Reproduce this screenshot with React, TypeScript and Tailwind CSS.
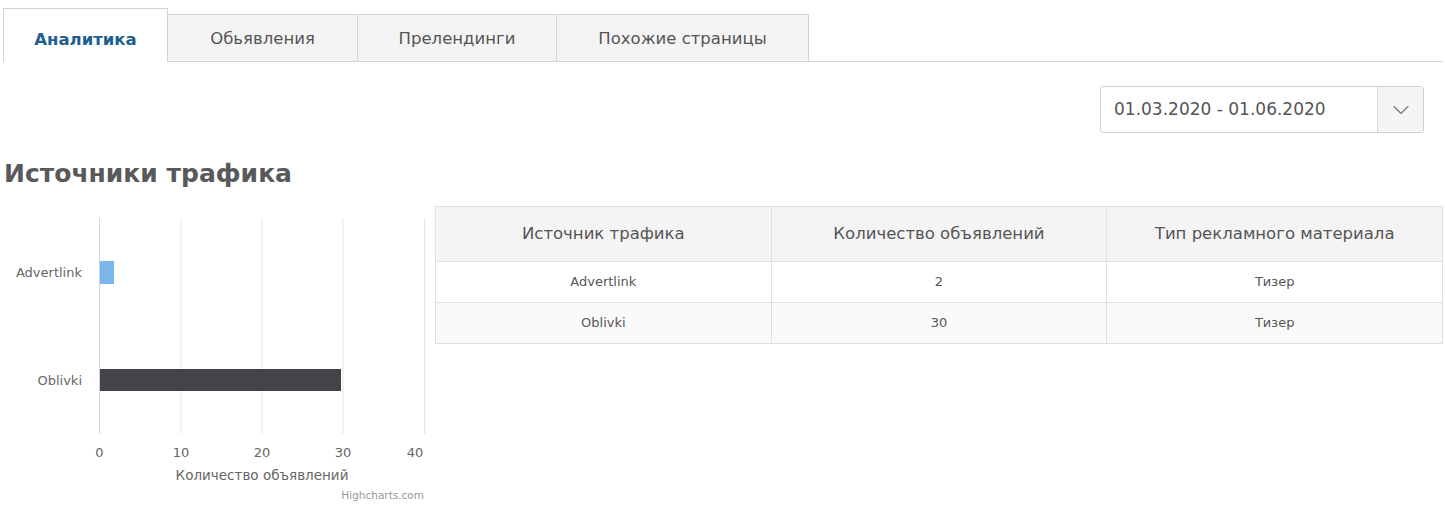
import { ChevronDown } from "lucide-react";

const tabs = [
  { label: "Аналитика", w: "w-[165px]", active: true },
  { label: "Обьявления", w: "w-[190px]" },
  { label: "Прелендинги", w: "w-[199px]" },
  { label: "Похожие страницы", w: "w-[252px]" },
];

const rows = [
  { source: "Advertlink", count: 2, type: "Тизер" },
  { source: "Oblivki", count: 30, type: "Тизер" },
];

const TrafficChart = () => {
  const grid = [99.5, 181, 262, 343, 424.5];
  return (
    <svg width="430" height="304" className="shrink-0" fontFamily="'DejaVu Sans', Verdana, sans-serif">
      {grid.slice(1).map((x) => (
        <line key={x} x1={x} x2={x} y1={12} y2={228} stroke="#e6e6e6" strokeWidth="1" />
      ))}
      <line x1={99.5} x2={99.5} y1={12} y2={228} stroke="#ccd6eb" strokeWidth="1" />
      <rect x={100} y={55} width={14} height={23} fill="#7cb5ec" />
      <rect x={100} y={163} width={241} height={22} fill="#434348" />
      <text x={82} y={71} fontSize="13" fill="#666" textAnchor="end">Advertlink</text>
      <text x={82} y={179} fontSize="13" fill="#666" textAnchor="end">Oblivki</text>
      {["0", "10", "20", "30", "40"].map((t, i) => (
        <text key={t} x={i === 4 ? 415 : grid[i]} y={251} fontSize="13" fill="#666" textAnchor="middle">
          {t}
        </text>
      ))}
      <text x={262} y={274} fontSize="13.5" fill="#666" textAnchor="middle">Количество объявлений</text>
      <text x={424} y={293} fontSize="10.5" fill="#999" textAnchor="end">Highcharts.com</text>
    </svg>
  );
};

export default function App() {
  return (
    <div className="bg-white min-h-[528px] font-['DejaVu_Sans',Verdana,sans-serif] text-[#555]">
      <div className="pt-[8px] pl-[3px] pr-[2px]">
        <div className="flex items-end border-b border-[#d4d4d4]">
          {tabs.map((t) =>
            t.active ? (
              <div
                key={t.label}
                className={`${t.w} h-[54px] -mb-px flex items-center justify-center pt-[10px] bg-white border border-b-0 border-[#d4d4d4] text-[16.5px] font-bold text-[#1d5f8e]`}
              >
                {t.label}
              </div>
            ) : (
              <div
                key={t.label}
                className={`${t.w} h-[47px] flex items-center justify-center pt-[3px] bg-[#f4f4f4] border-t border-r border-[#d4d4d4] text-[16.5px] text-[#555]`}
              >
                {t.label}
              </div>
            )
          )}
        </div>
      </div>

      <div className="flex justify-end pr-[21px] mt-[24px]">
        <div className="flex h-[47px] border border-[#d0d0d0] rounded-[3px] overflow-hidden">
          <div className="w-[276px] flex items-center pl-[13px] text-[17px] text-[#555]">01.03.2020 - 01.06.2020</div>
          <div className="w-[46px] flex items-center justify-center bg-[#f5f5f5] border-l border-[#d9d9d9]">
            <ChevronDown size={28} strokeWidth={1} className="text-[#777]" />
          </div>
        </div>
      </div>

      <h2 className="pl-[4px] mt-[26px] text-[25px] leading-[30px] font-bold text-[#58595b]">Источники трафика</h2>

      <div className="flex gap-[5px] mt-[17px] pr-[2px]">
        <TrafficChart />
        <table className="flex-1 self-start border-collapse border border-[#dcdcdc] table-fixed">
          <colgroup>
            <col className="w-1/3" />
            <col className="w-1/3" />
            <col className="w-1/3" />
          </colgroup>
          <thead>
            <tr className="bg-[#f4f4f4] h-[55px]">
              <th className="border border-[#e0e0e0] font-normal text-[16.5px] text-[#555]">Источник трафика</th>
              <th className="border border-[#e0e0e0] font-normal text-[16.5px] text-[#555]">Количество объявлений</th>
              <th className="border border-[#e0e0e0] font-normal text-[16.5px] text-[#555]">Тип рекламного материала</th>
            </tr>
          </thead>
          <tbody>
            {rows.map((r, i) => (
              <tr key={r.source} className={`h-[41px] ${i % 2 ? "bg-[#fafafa]" : "bg-white"}`}>
                <td className="border border-[#e0e0e0] text-center text-[13px] text-[#555]">{r.source}</td>
                <td className="border border-[#e0e0e0] text-center text-[13px] text-[#555]">{r.count}</td>
                <td className="border border-[#e0e0e0] text-center text-[13px] text-[#555]">{r.type}</td>
              </tr>
            ))}
          </tbody>
        </table>
      </div>
    </div>
  );
}
